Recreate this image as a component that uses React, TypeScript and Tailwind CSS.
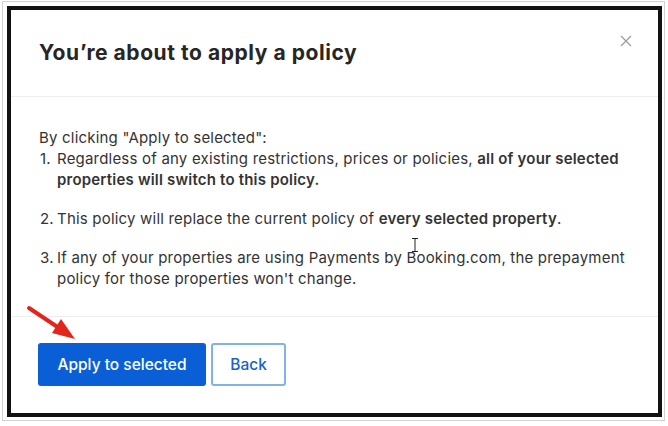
import React from "react";

export default function App() {
  const font = { fontFamily: 'Inter, "Liberation Sans", Arial, sans-serif' };
  return (
    <div className="w-[668px] h-[426px] bg-white overflow-hidden pt-[1px] pl-[2px]" style={font}>
      <div className="w-[663px] h-[420px] border border-[#d2d2d2] pl-[4px] pt-[4px]">
        <div className="relative w-[655px] h-[411px] border-[4px] border-[#121212] bg-white flex flex-col">
          {/* header */}
          <div className="h-[87px] flex items-center pl-[28px] border-b border-[#efedee]">
            <h1 className="text-[21px] font-bold tracking-[0.55px] text-[#262626]">You’re about to apply a policy</h1>
          </div>
          <button className="absolute right-[26px] top-[25px] w-[12px] h-[12px] text-[#9a9a9a]">
            <svg viewBox="0 0 12 12" width="12" height="12" fill="none" stroke="currentColor" strokeWidth="1.2">
              <path d="M1 1 L11 11 M11 1 L1 11" />
            </svg>
          </button>
          {/* body */}
          <div className="pl-[28px] pr-[20px] pt-[30px] pb-[27px] border-b border-[#efedee] text-[15px] tracking-[0.2px] leading-[21px] text-[#333333]">
            <p>By clicking "Apply to selected":</p>
            <ol className="mt-0">
              <li className="flex">
                <span className="w-[18px] pl-[1px] shrink-0">1.</span>
                <p>
                  Regardless of any existing restrictions, prices or policies, <b className="font-semibold">all of your selected properties will switch to this policy.</b>
                </p>
              </li>
              <li className="flex mt-[18px]">
                <span className="w-[18px] pl-[1px] shrink-0">2.</span>
                <p>
                  This policy will replace the current policy of <b className="font-semibold">every selected property</b>.
                </p>
              </li>
              <li className="flex mt-[18px]">
                <span className="w-[18px] pl-[1px] shrink-0">3.</span>
                <p>
                  If any of your properties are using Payments by Booking.com, the prepayment policy for those properties won't change.
                </p>
              </li>
            </ol>
          </div>
          {/* footer */}
          <div className="pl-[27px] pt-[26px] flex gap-[5px]">
            <button className="w-[168px] h-[43px] rounded-[3px] bg-[#0a5fd6] text-white text-[15.5px] font-medium">
              Apply to selected
            </button>
            <button className="w-[75px] h-[43px] rounded-[3px] border-2 border-[#7fb3ea] bg-white text-[#1a62c5] text-[15.5px] font-medium">
              Back
            </button>
          </div>
          {/* text cursor */}
          <svg className="absolute left-[400px] top-[228px]" width="8" height="14" viewBox="0 0 8 14" fill="none" stroke="#222" strokeWidth="1">
            <path d="M1 0.5 H7 M4 0.5 V13.5 M1 13.5 H7" />
          </svg>
        </div>
      </div>
      {/* red arrow */}
      <svg className="absolute left-0 top-0 pointer-events-none" width="668" height="426" viewBox="0 0 668 426">
        <line x1="29" y1="308" x2="62" y2="330" stroke="#e3261c" strokeWidth="4" strokeLinecap="round" />
        <polygon points="75,339 61,319 52,333" fill="#e3261c" />
      </svg>
    </div>
  );
}
